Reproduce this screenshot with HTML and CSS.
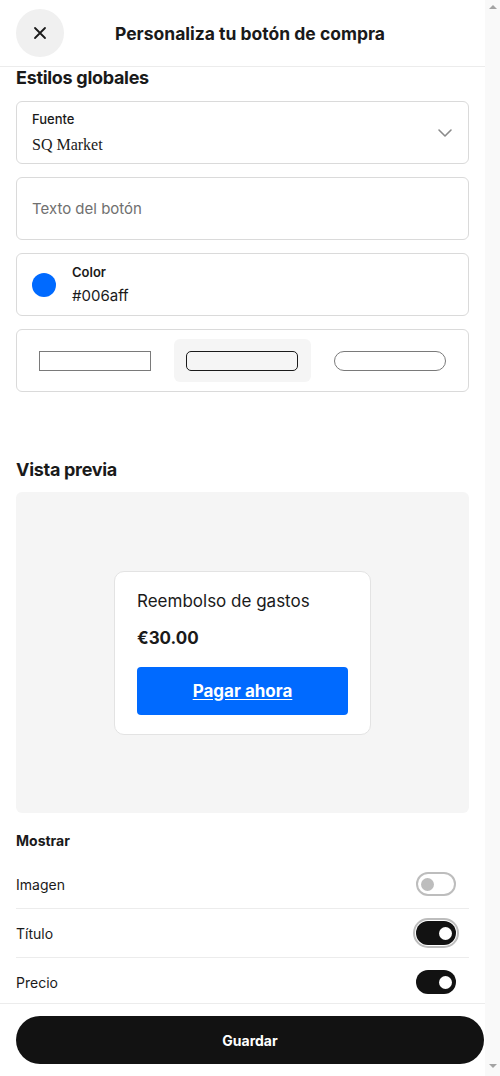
FILE: index.html
```html
<!DOCTYPE html>
<html lang="es">
<head>
<meta charset="utf-8">
<title>Personaliza tu botón de compra</title>
<link rel="stylesheet" href="styles.css">
</head>
<body>
<div class="window">
<div class="app">
  <header class="header">
    <button class="close" aria-label="Cerrar">
      <svg width="14" height="14" viewBox="0 0 14 14"><path d="M2 2L12 12M12 2L2 12" stroke="#1a1a1a" stroke-width="1.8" stroke-linecap="round"/></svg>
    </button>
    <h1 class="title">Personaliza tu botón de compra</h1>
  </header>

  <main class="main">
    <h2 class="section-title">Estilos globales</h2>

    <div class="field select">
      <div class="field-body">
        <div class="label">Fuente</div>
        <div class="value serif">SQ Market</div>
      </div>
      <svg class="chevron" width="16" height="10" viewBox="0 0 16 10"><path d="M2 2L8 8L14 2" fill="none" stroke="#8a8a8a" stroke-width="1.6" stroke-linecap="round" stroke-linejoin="round"/></svg>
    </div>

    <div class="field input">
      <span class="placeholder">Texto del botón</span>
    </div>

    <div class="field color">
      <span class="swatch"></span>
      <div class="field-body">
        <div class="label strong">Color</div>
        <div class="value">#006aff</div>
      </div>
    </div>

    <div class="field shapes">
      <div class="shape"><span class="sample square"></span></div>
      <div class="shape selected"><span class="sample rounded"></span></div>
      <div class="shape"><span class="sample pill"></span></div>
    </div>

    <h2 class="section-title preview-title">Vista previa</h2>

    <div class="preview">
      <div class="card">
        <div class="card-title">Reembolso de gastos</div>
        <div class="card-price">€30.00</div>
        <a class="pay" href="#">Pagar ahora</a>
      </div>
    </div>

    <h3 class="show-title">Mostrar</h3>

    <div class="rows">
      <div class="row">
        <span>Imagen</span>
        <span class="toggle off"><span class="knob"></span></span>
      </div>
      <div class="row">
        <span>Título</span>
        <span class="toggle on focus"><span class="knob"></span></span>
      </div>
      <div class="row">
        <span>Precio</span>
        <span class="toggle on"><span class="knob"></span></span>
      </div>
    </div>
  </main>

  <footer class="footer">
    <button class="save">Guardar</button>
  </footer>
</div>
<div class="scrollbar" aria-hidden="true">
  <span class="arrow up"></span>
  <span class="arrow down"></span>
</div>
</div>
</body>
</html>
```

FILE: styles.css
```css
body {
  margin: 0;
  font-family: Inter, "Noto Sans", "Liberation Sans", sans-serif;
  color: #1a1a1a;
  background: #ffffff;
}

.window {
  display: flex;
  height: 1076px;
  overflow: hidden;
}

.app {
  width: 485px;
  flex: none;
  display: flex;
  flex-direction: column;
}

.scrollbar {
  width: 15px;
  flex: none;
  background: #f9f9f9;
  display: flex;
  flex-direction: column;
  justify-content: space-between;
  align-items: center;
  padding: 5px 0 8px;
  box-sizing: border-box;
}

.arrow {
  width: 0;
  height: 0;
  border-left: 4px solid transparent;
  border-right: 4px solid transparent;
}

.arrow.up {
  border-bottom: 4px solid #a3a3a3;
}

.arrow.down {
  border-top: 4px solid #a3a3a3;
}

.header {
  flex: none;
  height: 66px;
  box-sizing: content-box;
  border-bottom: 1px solid #ececec;
  display: flex;
  align-items: center;
  padding: 0 16px;
}

.close {
  width: 48px;
  height: 48px;
  border-radius: 50%;
  border: none;
  background: #f0f0f0;
  display: flex;
  align-items: center;
  justify-content: center;
  padding: 0;
  flex: none;
}

.title {
  flex: 1;
  margin: 0;
  padding-right: 33px;
  text-align: center;
  font-size: 17.5px;
  font-weight: 700;
  letter-spacing: 0;
}

.main {
  flex: 1;
  overflow: hidden;
  padding: 0 16px;
}

.section-title {
  margin: 0;
  font-size: 18px;
  line-height: 22px;
  font-weight: 700;
  letter-spacing: -0.3px;
}

.field {
  box-sizing: border-box;
  height: 63px;
  border: 1px solid #dadada;
  border-radius: 6px;
  margin-top: 13px;
  display: flex;
  align-items: center;
}

.section-title + .field {
  margin-top: 12px;
}

.select {
  padding: 0 15px;
  justify-content: space-between;
}

.field-body {
  display: flex;
  flex-direction: column;
}

.label {
  font-size: 13px;
  line-height: 18px;
  font-weight: 500;
}

.label.strong {
  font-weight: 600;
}

.value {
  font-size: 15px;
  line-height: 20px;
  margin-top: 7px;
}

.serif {
  font-family: "Liberation Serif", serif;
  font-size: 16px;
}

.input {
  padding: 0 15px;
}

.placeholder {
  font-size: 15px;
  color: #707070;
}

.color {
  padding: 0 15px;
}

.color .value {
  margin-top: 5px;
}

.swatch {
  width: 24px;
  height: 24px;
  border-radius: 50%;
  background: #006aff;
  margin-right: 16px;
  flex: none;
}

.shapes {
  display: grid;
  grid-template-columns: repeat(3, 1fr);
  column-gap: 11px;
  padding: 0 10px;
  align-items: center;
}

.shape {
  height: 43px;
  border-radius: 6px;
  display: flex;
  align-items: center;
  justify-content: center;
}

.shape.selected {
  background: #f5f5f5;
}

.sample {
  box-sizing: border-box;
  width: 112px;
  height: 20px;
  border: 1px solid #7a7a7a;
}

.square {
  border-radius: 0;
}

.rounded {
  border-color: #1a1a1a;
  border-radius: 5px;
}

.pill {
  border-radius: 10px;
}

.preview-title {
  margin-top: 67px;
}

.preview {
  margin-top: 11px;
  height: 321px;
  background: #f5f5f5;
  border-radius: 6px;
  display: flex;
  align-items: center;
  justify-content: center;
}

.card {
  box-sizing: border-box;
  width: 257px;
  height: 164px;
  background: #ffffff;
  border: 1px solid #e3e3e3;
  border-radius: 10px;
  padding: 18px 22px 0;
}

.card-title {
  font-size: 17px;
  line-height: 22px;
}

.card-price {
  margin-top: 15px;
  font-size: 17px;
  line-height: 22px;
  font-weight: 700;
}

.pay {
  margin-top: 18px;
  height: 48px;
  display: flex;
  align-items: center;
  justify-content: center;
  background: #006aff;
  border-radius: 4px;
  color: #ffffff;
  font-size: 17px;
  font-weight: 700;
  text-decoration: underline;
  text-underline-offset: 2px;
}

.show-title {
  margin: 18px 0 0;
  font-size: 14px;
  line-height: 20px;
  font-weight: 700;
}

.rows {
  margin-top: 9px;
}

.row {
  height: 48px;
  display: flex;
  align-items: center;
  justify-content: space-between;
  border-bottom: 1px solid #ececec;
  font-size: 14px;
}

.toggle {
  box-sizing: border-box;
  width: 40px;
  height: 24px;
  border-radius: 12px;
  display: flex;
  align-items: center;
  padding: 0 4px;
  margin-right: 13px;
}

.toggle .knob {
  width: 13px;
  height: 13px;
  border-radius: 50%;
}

.toggle.off {
  border: 2px solid #bdbdbd;
  background: #ffffff;
  padding: 0 3px;
}

.toggle.off .knob {
  background: #bdbdbd;
}

.toggle.on {
  background: #121212;
  justify-content: flex-end;
}

.toggle.on .knob {
  background: #ffffff;
}

.toggle.focus {
  outline: 2px solid #bdbdbd;
  outline-offset: 1px;
}

.footer {
  flex: none;
  border-top: 1px solid #ececec;
  padding: 12px 0 12px 16px;
}

.save {
  display: block;
  width: 468px;
  height: 48px;
  border: none;
  border-radius: 24px;
  background: #121212;
  color: #ffffff;
  font-family: Inter, "Noto Sans", "Liberation Sans", sans-serif;
  font-size: 14px;
  font-weight: 700;
}
```
